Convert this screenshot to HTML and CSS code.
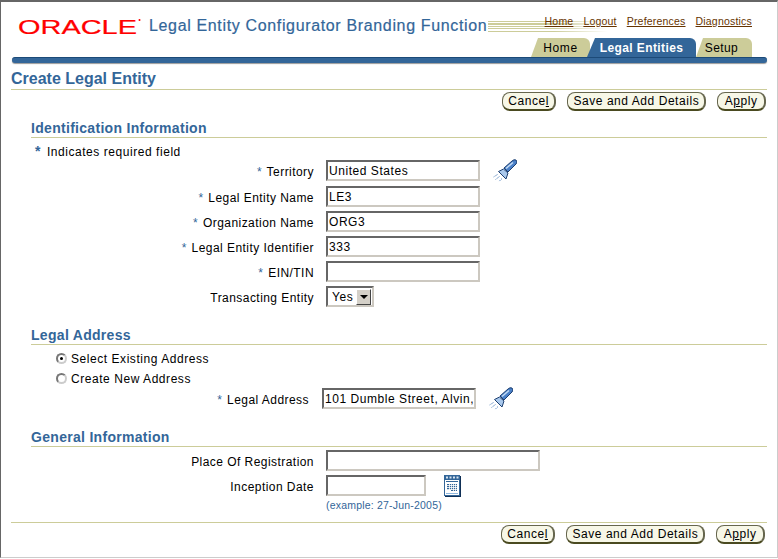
FILE: index.html
```html
<!DOCTYPE html>
<html lang="en">
<head>
<meta charset="utf-8">
<title>Create Legal Entity</title>
<link rel="stylesheet" href="styles.css">
</head>
<body>
<div class="frame">
  <header class="header">
    <div class="brand">
      <svg class="logo" width="124" height="22" viewBox="0 0 124 22" role="img" aria-label="Oracle">
        <text x="0" y="19" textLength="119" lengthAdjust="spacingAndGlyphs" class="logo-text">ORACLE</text>
        <circle cx="121.500" cy="5" r="1" fill="#f00"/>
      </svg>
      <span class="app-name">Legal Entity Configurator Branding Function</span>
    </div>
    <div class="stripes"></div>
    <div class="header-right">
      <nav class="global-links">
        <a>Home</a><a>Logout</a><a>Preferences</a><a>Diagnostics</a>
      </nav>
      <nav class="tabs">
        <span class="tab tab-first">Home</span>
        <span class="tab tab-active">Legal Entities</span>
        <span class="tab tab-last">Setup</span>
      </nav>
    </div>
  </header>
  <div class="bar"></div>
  <main class="main">
    <h1 class="title">Create Legal Entity</h1>
    <div class="actions">
      <button class="btn btn-cancel">Cance<u>l</u></button><button class="btn">Save and Add Details</button><button class="btn btn-apply">A<u>p</u>ply</button>
    </div>

    <section class="section section-ident">
      <h2 class="heading">Identification Information</h2>
      <p class="req"><span class="star-big">*</span> Indicates required field</p>
      <div class="row row-first"><label class="label"><span class="star">*</span> Territory</label><div class="field"><input class="input w154" value="United States"><svg class="torch" width="24" height="24" viewBox="0 0 24 24"><use href="#torch"/></svg></div></div>
      <div class="row"><label class="label"><span class="star">*</span> Legal Entity Name</label><div class="field"><input class="input w154" value="LE3"></div></div>
      <div class="row"><label class="label"><span class="star">*</span> Organization Name</label><div class="field"><input class="input w154" value="ORG3"></div></div>
      <div class="row"><label class="label"><span class="star">*</span> Legal Entity Identifier</label><div class="field"><input class="input w154" value="333"></div></div>
      <div class="row"><label class="label"><span class="star">*</span> EIN/TIN</label><div class="field"><input class="input w154" value=""></div></div>
      <div class="row"><label class="label">Transacting Entity</label><div class="field"><span class="select">Yes<span class="select-btn"></span></span></div></div>
    </section>

    <section class="section section-address">
      <h2 class="heading">Legal Address</h2>
      <div class="radio-row radio-first"><span class="radio radio-on"></span><span class="radio-text">Select Existing Address</span></div>
      <div class="radio-row"><span class="radio"></span><span class="radio-text">Create New Address</span></div>
      <div class="row row-address"><label class="label"><span class="star">*</span> Legal Address</label><div class="field"><input class="input w154" value="101 Dumble Street, Alvin,"><svg class="torch" width="24" height="24" viewBox="0 0 24 24"><use href="#torch"/></svg></div></div>
    </section>

    <section class="section section-general">
      <h2 class="heading">General Information</h2>
      <div class="row row-place"><label class="label">Place Of Registration</label><div class="field"><input class="input w214" value=""></div></div>
      <div class="row"><label class="label">Inception Date</label><div class="field"><input class="input w100" value="">
        <svg class="cal" width="17" height="22" viewBox="0 0 17 22">
          <rect x="1" y="1" width="16" height="21" fill="#0f2f55"/>
          <rect x="0" y="0" width="16" height="21" fill="#336699"/>
          <rect x="2" y="1.500" width="2" height="2" fill="#d8e4f0"/><rect x="5.500" y="1.500" width="2" height="2" fill="#d8e4f0"/><rect x="9" y="1.500" width="2" height="2" fill="#d8e4f0"/><rect x="12.500" y="1.500" width="2" height="2" fill="#d8e4f0"/>
          <rect x="1" y="5" width="14" height="15" fill="#fff"/>
          <rect x="2" y="6" width="12" height="1" fill="#336699"/>
          <rect x="3" y="9" width="10" height="6" fill="#336699"/>
          <rect x="7" y="15" width="6" height="1" fill="#336699"/>
          <path d="M5.500 9v7M7.500 9v6M9.500 9v7M11.500 9v7M3 10.500h10M3 12.500h10M3 14.500h10" stroke="#fff" stroke-width=".8"/>
          <rect x="2" y="18" width="12" height="1" fill="#8fb8e0"/>
        </svg></div></div>
      <div class="example">(example: 27-Jun-2005)</div>
    </section>

    <div class="actions actions-bottom">
      <button class="btn btn-cancel">Cance<u>l</u></button><button class="btn">Save and Add Details</button><button class="btn btn-apply">A<u>p</u>ply</button>
    </div>
    <nav class="footer-links">
      <a>Home</a><span>|</span><a>Legal Entities</a><span>|</span><a>Setup</a><span>|</span><a>Home</a><span>|</span><a>Logout</a><span>|</span><a>Preferences</a><span>|</span><a>Diagnostics</a>
    </nav>
  </main>
</div>
<svg class="defs" width="0" height="0" aria-hidden="true">
  <symbol id="torch" viewBox="0 0 24 24">
    <path d="M11 9 L19 2 Q21 0 23 1 Q25 3 23 5 L15 13 Z" fill="#4a80c8" stroke="#1d3f70" stroke-width="1"/>
    <path d="M13 9.500 L20 3.500" stroke="#c5dcf5" stroke-width="1.500" fill="none"/>
    <path d="M5.500 12.500 L10.500 10 L15 14 L13 20 Z" fill="#a9c8ec" stroke="#1d3f70" stroke-width="1"/>
    <path d="M4.500 15.500l-4 2.500M6.500 17.500l-4 3M9 19.500l-3 3" stroke="#6f97c8" stroke-width="1" stroke-dasharray="1.500 .6" fill="none"/>
  </symbol>
</svg>
</body>
</html>
```
FILE: styles.css
```css
* { box-sizing: border-box; }
html, body { margin: 0; padding: 0; background: #fff; }
body { width: 778px; height: 559px; overflow: hidden; font-family: "Liberation Sans", Arial, sans-serif; font-size: 12px; color: #000; letter-spacing: .55px; }
.frame { height: 558px; border-top: 2px solid #666; border-left: 1px solid #666; border-right: 1px solid #ccc; border-bottom: 1px solid #ccc; overflow: hidden; }
.defs { position: absolute; }

.header { position: relative; display: flex; justify-content: space-between; height: 55px; padding-left: 17px; padding-right: 25px; }
.brand { display: flex; align-items: flex-start; padding-top: 13px; }
.logo { display: block; }
.logo-text { font-family: "Liberation Sans", Arial, sans-serif; font-size: 21px; fill: #f00; stroke: #f00; stroke-width: .2px; letter-spacing: 0; }
.app-name { font-size: 16px; color: #336699; margin-left: 7px; margin-top: 2px; letter-spacing: .65px; white-space: nowrap; -webkit-text-stroke: .2px #336699; }
.stripes { position: absolute; left: 487px; top: 19px; width: 120px; height: 12px; background: repeating-linear-gradient(to bottom, #cccc99 0, #cccc99 1px, transparent 1px, transparent 2.500px); -webkit-mask-image: linear-gradient(to right, #000 55%, transparent); mask-image: linear-gradient(to right, #000 55%, transparent); }
.header-right { position: relative; display: flex; flex-direction: column; align-items: flex-end; }
.global-links { display: flex; gap: 10px; padding-top: 13px; font-size: 10.500px; letter-spacing: .2px; }
.global-links a { color: #663300; text-decoration: underline; }
.tabs { display: flex; align-items: flex-end; margin-top: auto; height: 19px; }
.tab { height: 19px; display: flex; align-items: center; justify-content: center; background: #cccc99; font-size: 12px; letter-spacing: .6px; border-radius: 7px 6px 0 0; }
.tab-first { width: 59px; clip-path: polygon(7px 0, 100% 0, 100% 100%, 0 100%); }
.tab-active { width: 109px; background: #336699; color: #fff; font-weight: bold; letter-spacing: .4px; clip-path: polygon(8px 0, 100% 0, 100% 100%, 0 100%); margin-left: -3px; }
.tab-last { width: 56px; padding-right: 5px; letter-spacing: .4px; clip-path: polygon(7px 0, 100% 0, 100% 100%, 0 100%); }
.bar { height: 6px; margin-left: 11px; width: 755px; background: #336699; border-top: 1px solid #1c4a78; border-radius: 3px; box-shadow: 0 1px 1px #999; }

.main { padding-left: 10px; padding-right: 10px; }
.title { margin: 6px 0 0; height: 21px; font-size: 16px; line-height: 20px; font-weight: bold; color: #336699; letter-spacing: 0; border-bottom: 1px solid #cccc99; width: 756px; }
.actions { display: flex; justify-content: flex-end; gap: 11px; margin-top: 2px; width: 755px; }
.btn { height: 19px; padding: 0 5px; font: 12px "Liberation Sans", Arial, sans-serif; letter-spacing: .55px; background: #f7f7e7; border: 1px solid #66664d; border-bottom: 2px solid #4a4a20; border-right-width: 2px; border-radius: 8px; color: #000; }
.btn-cancel { padding: 0 5.500px; }
.btn-apply { padding: 0 6.500px; }

.section { margin-left: 20px; width: 736px; }
.heading { margin: 0; height: 19px; font-size: 14px; line-height: 18px; font-weight: bold; color: #336699; letter-spacing: .3px; border-bottom: 1px solid #cccc99; }
.section-ident { margin-top: 8px; }
.req { margin: 5px 0 0 4px; height: 15px; line-height: 16px; font-size: 12px; }
.star-big { color: #336699; font-weight: bold; font-size: 14px; margin-right: 2px; }
.row { display: grid; grid-template-columns: 283px 1fr; column-gap: 12px; height: 25px; align-items: center; }
.row-first { margin-bottom: 1px; }
.label { text-align: right; white-space: nowrap; margin-top: 2px; letter-spacing: .45px; }
.star { color: #336699; margin-right: 1px; }
.field { display: flex; align-items: center; }
.input { height: 21px; padding: 1px 1px 0; font: 12px "Liberation Sans", Arial, sans-serif; letter-spacing: .55px; color: #000; background: #fff; border: 2px solid; border-color: #666 #ccc8c0 #ccc8c0 #666; outline: none; }
.w154 { width: 154px; }
.w214 { width: 214px; }
.w100 { width: 100px; }
.torch { margin-left: 13px; display: block; }
.cal { margin-left: 18px; display: block; }
.select { display: flex; align-items: center; justify-content: space-between; width: 48px; height: 21px; padding: 0 1px 0 4px; border: 2px solid; border-color: #666 #ccc8c0 #ccc8c0 #666; }
.select-btn { width: 15px; height: 16px; background: #d4d0c8; border: 1px solid; border-color: #fff #444 #444 #fff; position: relative; }
.select-btn::after { content: ""; position: absolute; left: 3px; top: 5px; border-left: 4px solid transparent; border-right: 4px solid transparent; border-top: 4px solid #000; }

.section-address { margin-top: 17px; }
.radio-row { display: flex; align-items: center; height: 20px; padding-left: 25px; }
.radio-first { margin-top: 3px; }
.radio { width: 11px; height: 11px; border-radius: 50%; border: 2px solid #777; border-right-color: #ccc; border-bottom-color: #ccc; background: #fff; margin-right: 4px; position: relative; }
.radio-on::after { content: ""; position: absolute; left: 2px; top: 2px; width: 3px; height: 3px; background: #000; border-radius: 50%; }
.radio-text { margin-top: 2px; }
.row-address { grid-template-columns: 278px 1fr; column-gap: 13px; margin-top: -2px; }
.section-general { margin-top: 17px; }
.row-place { margin-top: 1px; }
.example { padding-left: 295px; font-size: 10.500px; color: #336699; letter-spacing: .2px; line-height: 14px; }
.actions-bottom { margin-top: 10px; border-top: 1px solid #cccc99; padding-top: 2px; width: 756px; padding-right: 2px; }
.footer-links { display: flex; gap: 9px; margin-top: 11px; padding-left: 142px; line-height: 14px; white-space: nowrap; }
.footer-links a { color: #663300; text-decoration: underline; }
```
